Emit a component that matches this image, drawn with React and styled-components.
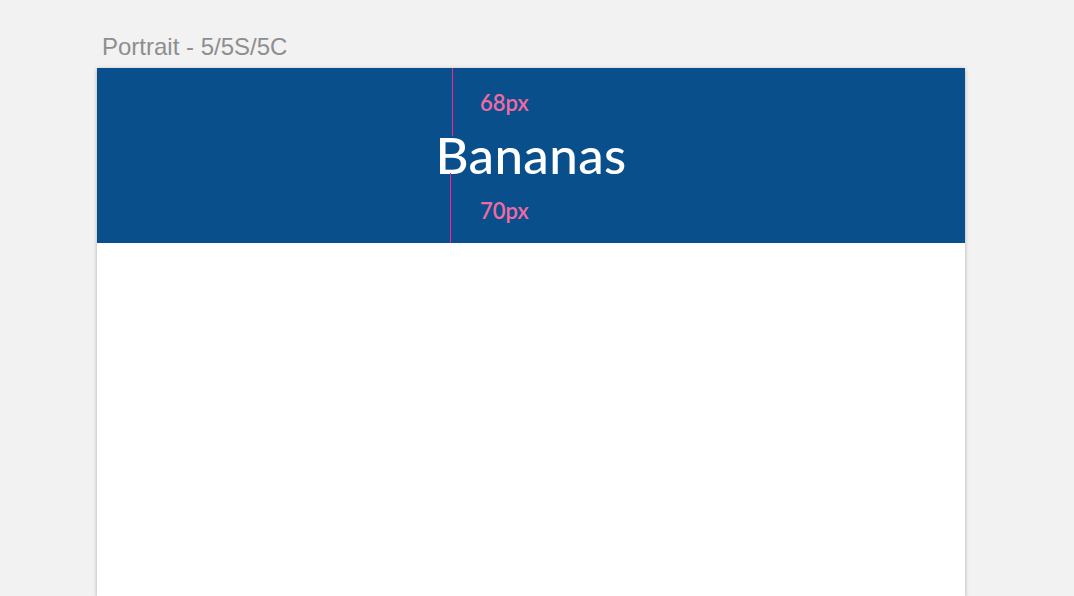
import React from "react";
import { styled, createGlobalStyle } from "styled-components";

const GlobalStyle = createGlobalStyle`
  html, body {
    margin: 0;
    padding: 0;
    background: #f2f2f2;
    overflow: hidden;
  }
`;

const Canvas = styled.div`
  width: 1074px;
  height: 596px;
  padding: 33px 0 0 97px;
  box-sizing: border-box;
  display: flex;
  flex-direction: column;
`;

const ArtboardLabel = styled.div`
  font-family: "Liberation Sans", Arial, sans-serif;
  font-size: 24px;
  line-height: 28px;
  color: #8e8e8e;
  margin: 0 0 7px 5px;
`;

const Artboard = styled.div`
  width: 868px;
  height: 600px;
  background: #ffffff;
  box-shadow: 0 1px 4px rgba(0, 0, 0, 0.28);
`;

const Header = styled.header`
  height: 175px;
  background: #084f8c;
  display: grid;
  grid-template-rows: 68px 37px 70px;
`;

const Spacing = styled.div`
  display: flex;
  padding-left: ${(p) => p.$x}px;
  gap: ${(p) => p.$gap}px;
`;

const Guide = styled.div`
  width: 1px;
  background: #ff1f8e;
`;

const Measure = styled.span`
  margin-top: ${(p) => p.$top}px;
  align-self: flex-start;
  font-family: "Lato", sans-serif;
  font-weight: 600;
  font-size: 22px;
  line-height: 22px;
  color: #f06ba4;
`;

const Title = styled.h1`
  margin: 0;
  text-align: center;
  font-family: "Lato", sans-serif;
  font-weight: 500;
  font-size: 51px;
  line-height: 37px;
  color: #ffffff;
  letter-spacing: 0.4px;
`;

export default function App() {
  return (
    <>
      <GlobalStyle />
      <Canvas>
        <ArtboardLabel>Portrait - 5/5S/5C</ArtboardLabel>
        <Artboard>
          <Header>
            <Spacing $x={355} $gap={27}>
              <Guide />
              <Measure $top={24}>68px</Measure>
            </Spacing>
            <Title>Bananas</Title>
            <Spacing $x={353} $gap={29}>
              <Guide />
              <Measure $top={27}>70px</Measure>
            </Spacing>
          </Header>
        </Artboard>
      </Canvas>
    </>
  );
}
